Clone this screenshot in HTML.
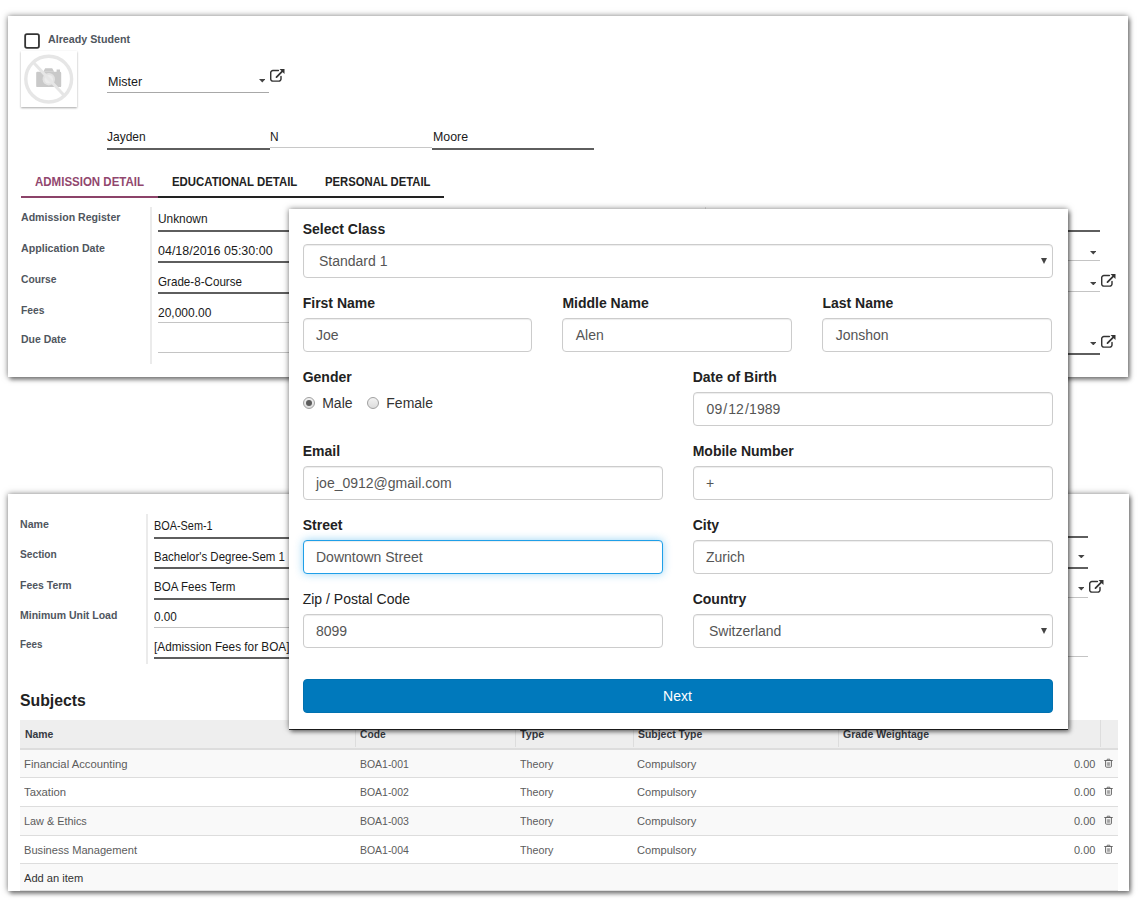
<!DOCTYPE html>
<html>
<head>
<meta charset="utf-8">
<title>Admission</title>
<style>
*{box-sizing:border-box;margin:0;padding:0}
html,body{width:1140px;height:900px;overflow:hidden;background:#fff}
body{font-family:"Liberation Sans",sans-serif;position:relative;color:#222}
.card{position:absolute;background:#fff;box-shadow:0 0 6px rgba(0,0,0,.5),2px 3px 4px rgba(0,0,0,.35)}
#c1{left:8px;top:16px;width:1120px;height:361px}
#c2{left:8px;top:493.5px;width:1121px;height:397px}
.a{position:absolute;white-space:nowrap;line-height:20px}
/* modal */
#m{position:absolute;left:289px;top:209px;width:779px;height:520px;background:#fff;box-shadow:0 1px 0 rgba(0,0,0,.78),0 0 6px rgba(0,0,0,.5),2px 3px 4px rgba(0,0,0,.4);font-size:14px;color:#333}
#m label{position:absolute;font-weight:bold;font-size:14px;line-height:20px;color:#222;white-space:nowrap}
#m .in{position:absolute;height:34px;border:1px solid #ccc;border-radius:4px;background:#fff;font-size:14px;line-height:20px;padding:6px 12px;color:#555;white-space:nowrap;box-shadow:inset 0 1px 1px rgba(0,0,0,.075)}
#m .sel{padding-left:15px}
#m .sel:after{content:"";position:absolute;right:5px;top:12.6px;border-left:3px solid transparent;border-right:3px solid transparent;border-top:6px solid #444}
#m .focus{border-color:#1f9fe8;box-shadow:inset 0 1px 1px rgba(0,0,0,.075),0 0 8px rgba(31,159,232,.45)}
#btn{position:absolute;left:14px;top:470px;width:750px;height:34px;background:#0079bc;border:1px solid #0071b0;border-radius:4px;color:#fff;text-align:center;font-size:14px;line-height:32px;text-indent:-1px}
.radio{position:absolute;width:12px;height:12px;border-radius:50%;border:1px solid #a0a0a0;background:linear-gradient(#f2f2f2,#dcdcdc)}
.radio.on:after{content:"";position:absolute;left:2px;top:2px;width:6px;height:6px;border-radius:50%;background:#5c5c5c}
</style>
</head>
<body>
<div class="card" id="c1"></div>
<div class="card" id="c2"></div>
<div id="L1">
<svg style="position:absolute;left:23px;top:32px" width="19" height="19" viewBox="0 0 19 19"><rect x="2.15" y="2.2" width="13.8" height="13.6" rx="1.8" fill="#fff" stroke="#343434" stroke-width="1.8"/></svg>
<div class="a" style="transform:scaleX(0.9298);transform-origin:0 0;left:47.90px;top:29px;font-size:11.5px;color:#50565e;font-weight:bold;">Already Student</div>
<div style="position:absolute;left:21px;top:51px;width:55.5px;height:56px;background:#fff;box-shadow:0 1px 2px rgba(0,0,0,.35)">
<svg width="56" height="56" viewBox="0 0 56 56" style="position:absolute;left:0;top:0">
<rect x="15.2" y="20.7" width="25" height="15.4" rx="1.2" fill="#c9c9c9"/>
<path d="M22.2 20.8L24.2 17.2H31.2L33.2 20.8Z" fill="#c9c9c9"/>
<rect x="35.6" y="18.5" width="3.4" height="3" fill="#c9c9c9"/>
<circle cx="27.8" cy="28.2" r="6.2" fill="#e2e2e2"/>
<circle cx="27.8" cy="28.2" r="4.3" fill="#ececec"/>
<circle cx="27.7" cy="28.1" r="22.9" fill="none" stroke="#e6e6e6" stroke-width="3.4"/>
<path d="M12.5 11.5L43.2 44.5" stroke="#e6e6e6" stroke-width="3" fill="none"/>
</svg></div>
<div class="a" style="transform:scaleX(0.9279);transform-origin:0 0;left:107.60px;top:72px;font-size:13.5px;color:#1a1a1a;">Mister</div>
<div style="position:absolute;left:107.40px;top:92.10px;width:161.40px;height:1px;background:#a8a8a8"></div>
<svg style="position:absolute;left:258.80px;top:79.30px" width="6.6" height="3.4" viewBox="0 0 6.6 3.4"><path d="M0 0H6.6L3.3 3.4Z" fill="#444"/></svg>
<svg style="position:absolute;left:270.20px;top:69.40px" width="16" height="14" viewBox="0 0 16 14"><path d="M8.4 1.5H2.9A2.2 2.2 0 0 0 .7 3.7V9.9A2.2 2.2 0 0 0 2.9 12.1H8.8A2.2 2.2 0 0 0 11 9.9V7.4" fill="none" stroke="#333" stroke-width="1.45" stroke-linecap="round"/><path d="M6.5 8.1L12.2 2.4" fill="none" stroke="#333" stroke-width="1.8" stroke-linecap="round"/><path d="M9.5 0H14.5V5Z" fill="#333"/></svg>
<div class="a" style="transform:scaleX(0.8867);transform-origin:0 0;left:107.40px;top:127px;font-size:13.5px;color:#1a1a1a;">Jayden</div>
<div class="a" style="transform:scaleX(0.8800);transform-origin:0 0;left:270.30px;top:127px;font-size:13.5px;color:#1a1a1a;">N</div>
<div class="a" style="transform:scaleX(0.9147);transform-origin:0 0;left:432.60px;top:127px;font-size:13.5px;color:#1a1a1a;">Moore</div>
<div style="position:absolute;left:107.40px;top:148.00px;width:162.20px;height:2px;background:#5e5e5e"></div>
<div style="position:absolute;left:269.60px;top:146.90px;width:162.80px;height:1px;background:#c8c8c8"></div>
<div style="position:absolute;left:432.40px;top:148.00px;width:162.00px;height:2px;background:#5e5e5e"></div>
<div class="a" style="transform:scaleX(0.8516);transform-origin:0 0;left:34.80px;top:172px;font-size:13.5px;color:#91476e;font-weight:bold;">ADMISSION DETAIL</div>
<div class="a" style="transform:scaleX(0.8438);transform-origin:0 0;left:171.70px;top:172px;font-size:13.5px;color:#222;font-weight:bold;">EDUCATIONAL DETAIL</div>
<div class="a" style="transform:scaleX(0.8356);transform-origin:0 0;left:324.60px;top:172px;font-size:13.5px;color:#222;font-weight:bold;">PERSONAL DETAIL</div>
<div style="position:absolute;left:21.00px;top:196.00px;width:137.00px;height:2px;background:#8c4369"></div>
<div style="position:absolute;left:158.00px;top:196.00px;width:286.00px;height:2px;background:#222"></div>
<div style="position:absolute;left:150.20px;top:206.70px;width:2px;height:157.30px;background:#ebebeb"></div>
<div style="position:absolute;left:704.90px;top:206.70px;width:1px;height:157.30px;background:#e2e2e2"></div>
<div class="a" style="transform:scaleX(0.9203);transform-origin:0 0;left:20.70px;top:207px;font-size:11.5px;color:#50565e;font-weight:bold;">Admission Register</div>
<div class="a" style="transform:scaleX(0.9257);transform-origin:0 0;left:20.70px;top:238px;font-size:11.5px;color:#50565e;font-weight:bold;">Application Date</div>
<div class="a" style="transform:scaleX(0.8959);transform-origin:0 0;left:20.70px;top:269px;font-size:11.5px;color:#50565e;font-weight:bold;">Course</div>
<div class="a" style="transform:scaleX(0.8964);transform-origin:0 0;left:20.70px;top:300px;font-size:11.5px;color:#50565e;font-weight:bold;">Fees</div>
<div class="a" style="transform:scaleX(0.9087);transform-origin:0 0;left:20.70px;top:329px;font-size:11.5px;color:#50565e;font-weight:bold;">Due Date</div>
<div class="a" style="transform:scaleX(0.8795);transform-origin:0 0;left:157.80px;top:209px;font-size:13.5px;color:#1a1a1a;">Unknown</div>
<div class="a" style="transform:scaleX(0.9252);transform-origin:0 0;left:157.80px;top:241px;font-size:13.5px;color:#1a1a1a;">04/18/2016 05:30:00</div>
<div class="a" style="transform:scaleX(0.8612);transform-origin:0 0;left:157.80px;top:272px;font-size:13.5px;color:#1a1a1a;">Grade-8-Course</div>
<div class="a" style="transform:scaleX(0.8875);transform-origin:0 0;left:157.80px;top:303px;font-size:13.5px;color:#1a1a1a;">20,000.00</div>
<div style="position:absolute;left:158.00px;top:230.30px;width:542.00px;height:2px;background:#5e5e5e"></div>
<div style="position:absolute;left:158.00px;top:260.80px;width:542.00px;height:2px;background:#5e5e5e"></div>
<div style="position:absolute;left:158.00px;top:291.50px;width:542.00px;height:2px;background:#5e5e5e"></div>
<div style="position:absolute;left:158.00px;top:322.20px;width:542.00px;height:1px;background:#c4c4c4"></div>
<div style="position:absolute;left:158.00px;top:351.70px;width:542.00px;height:1px;background:#c4c4c4"></div>
<div style="position:absolute;left:705.00px;top:230.00px;width:395.00px;height:2px;background:#5e5e5e"></div>
<div style="position:absolute;left:705.00px;top:260.00px;width:395.00px;height:1px;background:#c4c4c4"></div>
<div style="position:absolute;left:705.00px;top:291.20px;width:395.00px;height:1px;background:#c4c4c4"></div>
<div style="position:absolute;left:705.00px;top:353.00px;width:395.00px;height:2px;background:#5e5e5e"></div>
<svg style="position:absolute;left:1089.50px;top:251.20px" width="6.6" height="3.4" viewBox="0 0 6.6 3.4"><path d="M0 0H6.6L3.3 3.4Z" fill="#444"/></svg>
<svg style="position:absolute;left:1089.50px;top:281.80px" width="6.6" height="3.4" viewBox="0 0 6.6 3.4"><path d="M0 0H6.6L3.3 3.4Z" fill="#444"/></svg>
<svg style="position:absolute;left:1089.50px;top:341.80px" width="6.6" height="3.4" viewBox="0 0 6.6 3.4"><path d="M0 0H6.6L3.3 3.4Z" fill="#444"/></svg>
<svg style="position:absolute;left:1101.20px;top:274.00px" width="16" height="14" viewBox="0 0 16 14"><path d="M8.4 1.5H2.9A2.2 2.2 0 0 0 .7 3.7V9.9A2.2 2.2 0 0 0 2.9 12.1H8.8A2.2 2.2 0 0 0 11 9.9V7.4" fill="none" stroke="#333" stroke-width="1.45" stroke-linecap="round"/><path d="M6.5 8.1L12.2 2.4" fill="none" stroke="#333" stroke-width="1.8" stroke-linecap="round"/><path d="M9.5 0H14.5V5Z" fill="#333"/></svg>
<svg style="position:absolute;left:1101.20px;top:335.20px" width="16" height="14" viewBox="0 0 16 14"><path d="M8.4 1.5H2.9A2.2 2.2 0 0 0 .7 3.7V9.9A2.2 2.2 0 0 0 2.9 12.1H8.8A2.2 2.2 0 0 0 11 9.9V7.4" fill="none" stroke="#333" stroke-width="1.45" stroke-linecap="round"/><path d="M6.5 8.1L12.2 2.4" fill="none" stroke="#333" stroke-width="1.8" stroke-linecap="round"/><path d="M9.5 0H14.5V5Z" fill="#333"/></svg>
</div>
<div id="L2">
<div style="position:absolute;left:145.90px;top:514.00px;width:2px;height:150.00px;background:#ebebeb"></div>
<div class="a" style="transform:scaleX(0.9195);transform-origin:0 0;left:20.30px;top:514px;font-size:11.5px;color:#50565e;font-weight:bold;">Name</div>
<div class="a" style="transform:scaleX(0.8859);transform-origin:0 0;left:20.30px;top:544px;font-size:11.5px;color:#50565e;font-weight:bold;">Section</div>
<div class="a" style="transform:scaleX(0.9104);transform-origin:0 0;left:20.30px;top:575px;font-size:11.5px;color:#50565e;font-weight:bold;">Fees Term</div>
<div class="a" style="transform:scaleX(0.9120);transform-origin:0 0;left:20.30px;top:605px;font-size:11.5px;color:#50565e;font-weight:bold;">Minimum Unit Load</div>
<div class="a" style="transform:scaleX(0.8583);transform-origin:0 0;left:20.30px;top:634px;font-size:11.5px;color:#50565e;font-weight:bold;">Fees</div>
<div class="a" style="transform:scaleX(0.8053);transform-origin:0 0;left:154.30px;top:516px;font-size:13.5px;color:#1a1a1a;">BOA-Sem-1</div>
<div class="a" style="transform:scaleX(0.8492);transform-origin:0 0;left:154.30px;top:547px;font-size:13.5px;color:#1a1a1a;">Bachelor's Degree-Sem 1</div>
<div class="a" style="transform:scaleX(0.8566);transform-origin:0 0;left:154.30px;top:577px;font-size:13.5px;color:#1a1a1a;">BOA Fees Term</div>
<div class="a" style="transform:scaleX(0.8678);transform-origin:0 0;left:154.30px;top:607px;font-size:13.5px;color:#1a1a1a;">0.00</div>
<div class="a" style="transform:scaleX(0.8725);transform-origin:0 0;left:154.30px;top:637px;font-size:13.5px;color:#1a1a1a;">[Admission Fees for BOA]</div>
<div style="position:absolute;left:154.00px;top:536.60px;width:546.00px;height:2px;background:#5e5e5e"></div>
<div style="position:absolute;left:154.00px;top:567.10px;width:546.00px;height:2px;background:#5e5e5e"></div>
<div style="position:absolute;left:154.00px;top:597.60px;width:546.00px;height:2px;background:#5e5e5e"></div>
<div style="position:absolute;left:154.00px;top:626.90px;width:546.00px;height:1px;background:#c4c4c4"></div>
<div style="position:absolute;left:154.00px;top:656.70px;width:546.00px;height:2px;background:#5e5e5e"></div>
<div style="position:absolute;left:700.00px;top:536.30px;width:387.50px;height:2px;background:#5e5e5e"></div>
<div style="position:absolute;left:700.00px;top:566.50px;width:387.50px;height:2px;background:#5e5e5e"></div>
<div style="position:absolute;left:700.00px;top:596.80px;width:387.50px;height:1px;background:#c4c4c4"></div>
<div style="position:absolute;left:700.00px;top:655.80px;width:387.50px;height:1px;background:#c4c4c4"></div>
<svg style="position:absolute;left:1078.00px;top:555.00px" width="6.6" height="3.4" viewBox="0 0 6.6 3.4"><path d="M0 0H6.6L3.3 3.4Z" fill="#444"/></svg>
<svg style="position:absolute;left:1077.50px;top:587.30px" width="6.6" height="3.4" viewBox="0 0 6.6 3.4"><path d="M0 0H6.6L3.3 3.4Z" fill="#444"/></svg>
<svg style="position:absolute;left:1088.80px;top:579.80px" width="16" height="14" viewBox="0 0 16 14"><path d="M8.4 1.5H2.9A2.2 2.2 0 0 0 .7 3.7V9.9A2.2 2.2 0 0 0 2.9 12.1H8.8A2.2 2.2 0 0 0 11 9.9V7.4" fill="none" stroke="#333" stroke-width="1.45" stroke-linecap="round"/><path d="M6.5 8.1L12.2 2.4" fill="none" stroke="#333" stroke-width="1.8" stroke-linecap="round"/><path d="M9.5 0H14.5V5Z" fill="#333"/></svg>
<div class="a" style="transform:scaleX(0.9300);transform-origin:0 0;left:20.30px;top:691px;font-size:17px;color:#222;font-weight:bold;">Subjects</div>
<div style="position:absolute;left:20px;top:720px;width:1098.2px;height:30px;background:#eee;border-bottom:2px solid #ddd"></div>
<div style="position:absolute;left:20px;top:750px;width:1098.2px;height:28.00px;background:#f9f9f9;border-bottom:1px solid #ddd"></div>
<div style="position:absolute;left:20px;top:778px;width:1098.2px;height:29.00px;background:#fff;border-bottom:1px solid #ddd"></div>
<div style="position:absolute;left:20px;top:807px;width:1098.2px;height:29.00px;background:#f9f9f9;border-bottom:1px solid #ddd"></div>
<div style="position:absolute;left:20px;top:836px;width:1098.2px;height:28.00px;background:#fff;border-bottom:1px solid #ddd"></div>
<div style="position:absolute;left:20px;top:864px;width:1098.2px;height:26.50px;background:#f9f9f9;border-bottom:1px solid #ddd"></div>
<div style="position:absolute;left:354.90px;top:720.40px;width:1px;height:26.60px;background:#ddd"></div>
<div style="position:absolute;left:514.90px;top:720.40px;width:1px;height:26.60px;background:#ddd"></div>
<div style="position:absolute;left:632.80px;top:720.40px;width:1px;height:26.60px;background:#ddd"></div>
<div style="position:absolute;left:837.70px;top:720.40px;width:1px;height:26.60px;background:#ddd"></div>
<div style="position:absolute;left:1100.20px;top:720.40px;width:1px;height:26.60px;background:#ddd"></div>
<div class="a" style="transform:scaleX(0.9480);transform-origin:0 0;left:25.30px;top:724px;font-size:11px;color:#363a42;font-weight:bold;">Name</div>
<div class="a" style="transform:scaleX(0.9310);transform-origin:0 0;left:360.40px;top:724px;font-size:11px;color:#363a42;font-weight:bold;">Code</div>
<div class="a" style="transform:scaleX(0.9736);transform-origin:0 0;left:520.00px;top:724px;font-size:11px;color:#363a42;font-weight:bold;">Type</div>
<div class="a" style="transform:scaleX(0.9491);transform-origin:0 0;left:638.20px;top:724px;font-size:11px;color:#363a42;font-weight:bold;">Subject Type</div>
<div class="a" style="transform:scaleX(0.9528);transform-origin:0 0;left:842.50px;top:724px;font-size:11px;color:#363a42;font-weight:bold;">Grade Weightage</div>
<div class="a" style="transform:scaleX(0.9812);transform-origin:0 0;left:23.90px;top:754px;font-size:11.5px;color:#5c5c5c;">Financial Accounting</div>
<div class="a" style="transform:scaleX(0.9087);transform-origin:0 0;left:359.60px;top:754px;font-size:11.5px;color:#5c5c5c;">BOA1-001</div>
<div class="a" style="transform:scaleX(0.9303);transform-origin:0 0;left:519.60px;top:754px;font-size:11.5px;color:#5c5c5c;">Theory</div>
<div class="a" style="transform:scaleX(0.9665);transform-origin:0 0;left:636.80px;top:754px;font-size:11.5px;color:#5c5c5c;">Compulsory</div>
<div class="a" style="transform:scaleX(0.9515);transform-origin:0 0;left:1074.20px;top:754px;font-size:11.5px;color:#5c5c5c;">0.00</div>
<svg style="position:absolute;left:1104.2px;top:758.4px" width="9" height="10" viewBox="0 0 9 10"><path d="M1.6 3V8.4A.8.8 0 0 0 2.4 9.2H6.6A.8.8 0 0 0 7.4 8.4V3" fill="none" stroke="#666" stroke-width="1"/><path d="M.3 2.5H8.7" stroke="#666" stroke-width="1"/><path d="M3.2 2.3V1.2H5.8V2.3" fill="none" stroke="#666" stroke-width=".9"/><path d="M3.4 4.2V7.8M4.5 4.2V7.8M5.6 4.2V7.8" stroke="#666" stroke-width=".6"/></svg>
<div class="a" style="transform:scaleX(0.9828);transform-origin:0 0;left:23.90px;top:782px;font-size:11.5px;color:#5c5c5c;">Taxation</div>
<div class="a" style="transform:scaleX(0.9087);transform-origin:0 0;left:359.60px;top:782px;font-size:11.5px;color:#5c5c5c;">BOA1-002</div>
<div class="a" style="transform:scaleX(0.9303);transform-origin:0 0;left:519.60px;top:782px;font-size:11.5px;color:#5c5c5c;">Theory</div>
<div class="a" style="transform:scaleX(0.9665);transform-origin:0 0;left:636.80px;top:782px;font-size:11.5px;color:#5c5c5c;">Compulsory</div>
<div class="a" style="transform:scaleX(0.9515);transform-origin:0 0;left:1074.20px;top:782px;font-size:11.5px;color:#5c5c5c;">0.00</div>
<svg style="position:absolute;left:1104.2px;top:786.4px" width="9" height="10" viewBox="0 0 9 10"><path d="M1.6 3V8.4A.8.8 0 0 0 2.4 9.2H6.6A.8.8 0 0 0 7.4 8.4V3" fill="none" stroke="#666" stroke-width="1"/><path d="M.3 2.5H8.7" stroke="#666" stroke-width="1"/><path d="M3.2 2.3V1.2H5.8V2.3" fill="none" stroke="#666" stroke-width=".9"/><path d="M3.4 4.2V7.8M4.5 4.2V7.8M5.6 4.2V7.8" stroke="#666" stroke-width=".6"/></svg>
<div class="a" style="transform:scaleX(0.9447);transform-origin:0 0;left:23.90px;top:811px;font-size:11.5px;color:#5c5c5c;">Law &amp; Ethics</div>
<div class="a" style="transform:scaleX(0.9087);transform-origin:0 0;left:359.60px;top:811px;font-size:11.5px;color:#5c5c5c;">BOA1-003</div>
<div class="a" style="transform:scaleX(0.9303);transform-origin:0 0;left:519.60px;top:811px;font-size:11.5px;color:#5c5c5c;">Theory</div>
<div class="a" style="transform:scaleX(0.9665);transform-origin:0 0;left:636.80px;top:811px;font-size:11.5px;color:#5c5c5c;">Compulsory</div>
<div class="a" style="transform:scaleX(0.9515);transform-origin:0 0;left:1074.20px;top:811px;font-size:11.5px;color:#5c5c5c;">0.00</div>
<svg style="position:absolute;left:1104.2px;top:815.4px" width="9" height="10" viewBox="0 0 9 10"><path d="M1.6 3V8.4A.8.8 0 0 0 2.4 9.2H6.6A.8.8 0 0 0 7.4 8.4V3" fill="none" stroke="#666" stroke-width="1"/><path d="M.3 2.5H8.7" stroke="#666" stroke-width="1"/><path d="M3.2 2.3V1.2H5.8V2.3" fill="none" stroke="#666" stroke-width=".9"/><path d="M3.4 4.2V7.8M4.5 4.2V7.8M5.6 4.2V7.8" stroke="#666" stroke-width=".6"/></svg>
<div class="a" style="transform:scaleX(0.9659);transform-origin:0 0;left:23.90px;top:840px;font-size:11.5px;color:#5c5c5c;">Business Management</div>
<div class="a" style="transform:scaleX(0.9087);transform-origin:0 0;left:359.60px;top:840px;font-size:11.5px;color:#5c5c5c;">BOA1-004</div>
<div class="a" style="transform:scaleX(0.9303);transform-origin:0 0;left:519.60px;top:840px;font-size:11.5px;color:#5c5c5c;">Theory</div>
<div class="a" style="transform:scaleX(0.9665);transform-origin:0 0;left:636.80px;top:840px;font-size:11.5px;color:#5c5c5c;">Compulsory</div>
<div class="a" style="transform:scaleX(0.9515);transform-origin:0 0;left:1074.20px;top:840px;font-size:11.5px;color:#5c5c5c;">0.00</div>
<svg style="position:absolute;left:1104.2px;top:844.4px" width="9" height="10" viewBox="0 0 9 10"><path d="M1.6 3V8.4A.8.8 0 0 0 2.4 9.2H6.6A.8.8 0 0 0 7.4 8.4V3" fill="none" stroke="#666" stroke-width="1"/><path d="M.3 2.5H8.7" stroke="#666" stroke-width="1"/><path d="M3.2 2.3V1.2H5.8V2.3" fill="none" stroke="#666" stroke-width=".9"/><path d="M3.4 4.2V7.8M4.5 4.2V7.8M5.6 4.2V7.8" stroke="#666" stroke-width=".6"/></svg>
<div class="a" style="transform:scaleX(0.9662);transform-origin:0 0;left:23.90px;top:868px;font-size:11.5px;color:#333;">Add an item</div>
</div>
<div id="m">
<label style="left:13.70px;top:10px;font-weight:bold">Select Class</label>
<div class="in sel" style="left:14px;top:35px;width:750px">Standard 1</div>
<label style="left:13.70px;top:84px;font-weight:bold">First Name</label>
<div class="in " style="left:14px;top:109px;width:229px">Joe</div>
<label style="left:273.40px;top:84px;font-weight:bold">Middle Name</label>
<div class="in " style="left:273px;top:109px;width:230px;padding-left:12.7px">Alen</div>
<label style="left:533.40px;top:84px;font-weight:bold">Last Name</label>
<div class="in " style="left:533px;top:109px;width:230px;padding-left:12.7px">Jonshon</div>
<label style="left:13.70px;top:158px;font-weight:bold">Gender</label>
<label style="left:403.70px;top:158px;font-weight:bold">Date of Birth</label>
<div class="in " style="left:404px;top:183px;width:360px;padding-left:12.6px">09<span style="margin:0 1px 0 1.1px">/</span>12<span style="margin:0 .3px 0 1.2px">/</span>1989</div>
<div class="radio on" style="left:14px;top:187.5px"></div><div class="a" style="left:33.2px;top:184px;line-height:20px;font-size:14px;color:#333">Male</div>
<div class="radio" style="left:78px;top:187.5px"></div><div class="a" style="left:97.3px;top:184px;line-height:20px;font-size:14px;color:#333">Female</div>
<label style="left:13.70px;top:232px;font-weight:bold">Email</label>
<div class="in " style="left:14px;top:257px;width:360px">joe_0912@gmail.com</div>
<label style="left:403.70px;top:232px;font-weight:bold">Mobile Number</label>
<div class="in " style="left:404px;top:257px;width:360px">+</div>
<label style="left:13.70px;top:306px;font-weight:bold">Street</label>
<div class="in focus" style="left:14px;top:331px;width:360px">Downtown Street</div>
<label style="left:403.70px;top:306px;font-weight:bold">City</label>
<div class="in " style="left:404px;top:331px;width:360px">Zurich</div>
<label style="left:13.70px;top:380px;font-weight:normal">Zip / Postal Code</label>
<div class="in " style="left:14px;top:405px;width:360px">8099</div>
<label style="left:403.70px;top:380px;font-weight:bold">Country</label>
<div class="in sel" style="left:404px;top:405px;width:360px">Switzerland</div>
<div id="btn">Next</div>
</div>
</body>
</html>
